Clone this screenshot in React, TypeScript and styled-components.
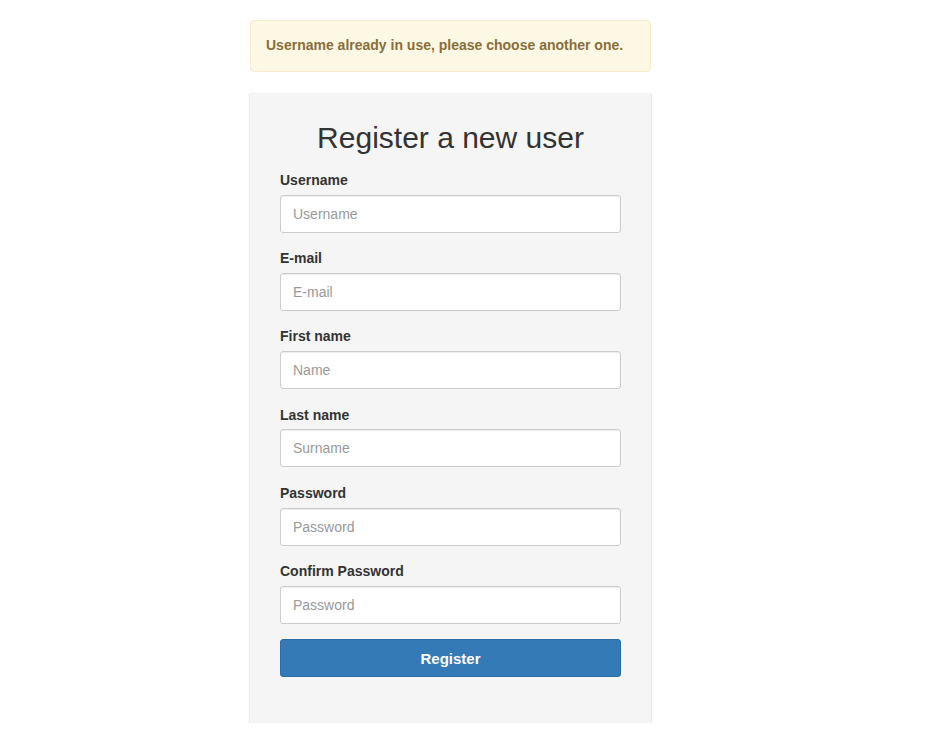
import React from "react";
import styled, { createGlobalStyle } from "styled-components";

const GlobalStyle = createGlobalStyle`
  html, body {
    margin: 0;
    padding: 0;
    background: #fff;
  }
  body {
    font-family: "Liberation Sans", Arial, sans-serif;
    font-size: 14px;
    line-height: 1.42857;
    color: #333;
  }
  * {
    box-sizing: border-box;
  }
`;

const Page = styled.div`
  width: 401px;
  margin: 20px 0 0 250px;
`;

const Alert = styled.div`
  background: #fcf8e3;
  border: 1px solid #faebcc;
  border-radius: 4px;
  color: #8a6d3b;
  font-weight: bold;
  padding: 15px;
  margin-bottom: 21px;
`;

const Panel = styled.form`
  background: #f5f5f5;
  padding: 28px 30px 31px;
  box-shadow: 0 1px 2px rgba(0, 0, 0, 0.25);
`;

const Title = styled.h2`
  font-size: 30px;
  font-weight: 500;
  line-height: 1.1;
  text-align: center;
  margin: 0 0 16px;
  color: #333;
`;

const Group = styled.div`
  margin-bottom: 15.2px;
`;

const Label = styled.label`
  display: block;
  font-weight: bold;
  padding-top: 1px;
  margin-bottom: 4px;
`;

const Input = styled.input`
  display: block;
  width: 100%;
  height: 38px;
  padding: 6px 12px;
  font-family: inherit;
  font-size: 14px;
  color: #555;
  background: #fff;
  border: 1px solid #ccc;
  border-radius: 3px;
  box-shadow: inset 0 1px 1px rgba(0, 0, 0, 0.075);

  &::placeholder {
    color: #999;
  }
`;

const Button = styled.button`
  display: block;
  width: 100%;
  height: 38px;
  font-family: inherit;
  font-size: 15px;
  font-weight: bold;
  color: #fff;
  background: #337ab7;
  border: 1px solid #2e6da4;
  border-radius: 3px;
  cursor: pointer;
`;

const fields = [
  { label: "Username", placeholder: "Username", type: "text" },
  { label: "E-mail", placeholder: "E-mail", type: "email" },
  { label: "First name", placeholder: "Name", type: "text" },
  { label: "Last name", placeholder: "Surname", type: "text" },
  { label: "Password", placeholder: "Password", type: "password" },
  { label: "Confirm Password", placeholder: "Password", type: "password" },
];

const App = () => {
  return (
    <>
      <GlobalStyle />
      <Page>
        <Alert>Username already in use, please choose another one.</Alert>
        <Panel onSubmit={(e) => e.preventDefault()}>
          <Title>Register a new user</Title>
          {fields.map((f) => (
            <Group key={f.label}>
              <Label>{f.label}</Label>
              <Input type={f.type} placeholder={f.placeholder} />
            </Group>
          ))}
          <Group>
            <Button type="submit">Register</Button>
          </Group>
        </Panel>
      </Page>
    </>
  );
};

export default App;
